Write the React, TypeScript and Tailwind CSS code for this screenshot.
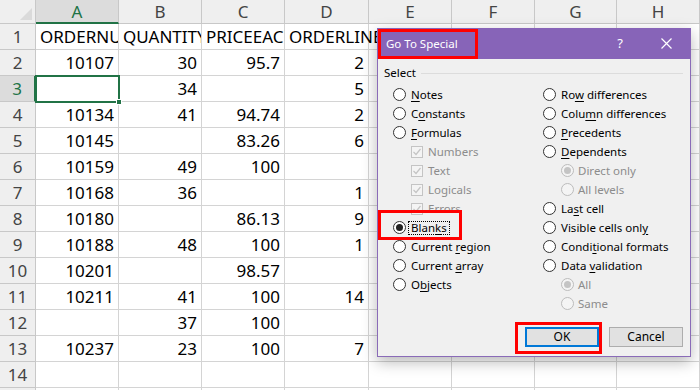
import React from "react";

const COLS = ["A", "B", "C", "D", "E", "F", "G", "H"];
const DATA: string[][] = [
  ["ORDERNUMBER", "QUANTITYORDERED", "PRICEEACH", "ORDERLINENUMBER"],
  ["10107", "30", "95.7", "2"],
  ["", "34", "", "5"],
  ["10134", "41", "94.74", "2"],
  ["10145", "", "83.26", "6"],
  ["10159", "49", "100", ""],
  ["10168", "36", "", "1"],
  ["10180", "", "86.13", "9"],
  ["10188", "48", "100", "1"],
  ["10201", "", "98.57", ""],
  ["10211", "41", "100", "14"],
  ["", "37", "100", ""],
  ["10237", "23", "100", "7"],
  ["", "", "", ""],
  ["", "", "", ""],
];

function Sheet() {
  const cells: React.ReactNode[] = [];
  cells.push(
    <div key="corner" className="relative bg-[#efefef] border-r border-b border-[#c8c8c8]">
      <svg className="absolute right-[3px] bottom-[3px]" width="12" height="12" viewBox="0 0 12 12">
        <polygon points="12,0 12,12 0,12" fill="#dadada" />
      </svg>
    </div>
  );
  COLS.forEach((c, i) => {
    const sel = i === 0;
    cells.push(
      <div
        key={"h" + c}
        className={
          sel
            ? "flex items-center justify-center bg-[#dcdcdc] text-[#217346] border-r border-[#c8c8c8] border-b-2 border-b-[#217346]"
            : "flex items-center justify-center bg-[#efefef] text-[#444] border-r border-b border-[#c8c8c8]"
        }
      >
        {c}
      </div>
    );
  });
  DATA.forEach((row, r) => {
    const sel = r === 2;
    cells.push(
      <div
        key={"r" + r}
        className={
          sel
            ? "flex items-center justify-center bg-[#dcdcdc] text-[#217346] border-b border-[#c8c8c8] border-r-2 border-r-[#217346]"
            : "flex items-center justify-center bg-[#efefef] text-[#444] border-r border-b border-[#c8c8c8]"
        }
      >
        {r + 1}
      </div>
    );
    COLS.forEach((c, ci) => {
      const v = ci < 4 ? row[ci] : "";
      const isHeader = r === 0;
      const overflow = isHeader && ci === 3;
      cells.push(
        <div
          key={"c" + r + c}
          className={
            "flex items-center border-r border-b border-[#d4d4d4] whitespace-nowrap " +
            (isHeader
              ? overflow
                ? "justify-start pl-[4px] overflow-visible"
                : "justify-start pl-[4px] overflow-hidden"
              : "justify-end pr-[4px] overflow-hidden")
          }
        >
          {overflow ? <span className="w-[88px] shrink-0 overflow-hidden">{v}</span> : v}
        </div>
      );
    });
  });
  return (
    <div className="grid grid-cols-[36px_83px_83px_83px_84px_83px_83px_82px_83px] grid-rows-[24px_repeat(15,26px)] font-['Noto_Sans',sans-serif] text-[17px] leading-none text-black">
      {cells}
    </div>
  );
}

function Radio({ checked, disabled }: { checked?: boolean; disabled?: boolean }) {
  return (
    <span
      className={
        "w-[13px] h-[13px] rounded-full border flex items-center justify-center shrink-0 " +
        (disabled ? "border-[#bcbcbc] bg-[#f4f4f4]" : "border-[#333] bg-white")
      }
    >
      {checked && (
        <span className={"w-[7px] h-[7px] rounded-full " + (disabled ? "bg-[#c4c4c4]" : "bg-[#222]")} />
      )}
    </span>
  );
}

function Check() {
  return (
    <span className="w-[12px] h-[12px] border border-[#c4c4c4] bg-[#f4f4f4] flex items-center justify-center shrink-0">
      <svg width="10" height="10" viewBox="0 0 10 10">
        <polyline points="1.5,5 4,7.5 8.5,2" fill="none" stroke="#c4c4c4" strokeWidth="1.2" />
      </svg>
    </span>
  );
}

function Lbl({ pre, u, post }: { pre: string; u: string; post: string }) {
  return (
    <span>
      {pre}
      <span className="underline underline-offset-[2px]">{u}</span>
      {post}
    </span>
  );
}

function RadioRow({ children, checked, focus }: { children: React.ReactNode; checked?: boolean; focus?: boolean }) {
  return (
    <div className="h-[19px] flex items-center gap-[5px]">
      <Radio checked={checked} />
      {focus ? (
        <span className="border border-dotted border-black ml-[-3px] px-[2px] leading-[12px]">{children}</span>
      ) : (
        children
      )}
    </div>
  );
}

function CheckRow({ text }: { text: string }) {
  return (
    <div className="h-[19px] flex items-center gap-[5px] ml-[18px] text-[#8c8c8c]">
      <Check />
      {text}
    </div>
  );
}

function SubRadio({ text, checked }: { text: string; checked?: boolean }) {
  return (
    <div className="h-[19px] flex items-center gap-[4px] ml-[18px] text-[#8c8c8c]">
      <Radio checked={checked} disabled />
      {text}
    </div>
  );
}

function Dialog() {
  return (
    <div className="absolute left-[377px] top-[28px] w-[314px] h-[329px] bg-[#f0f0f0] border border-t-0 border-[#8a6bb8] shadow-[0_5px_14px_rgba(0,0,0,0.28)] flex flex-col font-['Noto_Sans',sans-serif] text-[11.5px] text-black">
      <div className="h-[31px] bg-[#8764b8] flex items-center pl-[9px] text-white -mx-px">
        <span className="text-[11.5px]">Go To Special</span>
        <span className="ml-auto mr-[38px] text-[13px]">?</span>
        <svg className="mr-[19px]" width="11" height="11" viewBox="0 0 11 11">
          <path d="M0.5 0.5 L10.5 10.5 M10.5 0.5 L0.5 10.5" stroke="white" strokeWidth="1.2" />
        </svg>
      </div>
      <div className="flex-1 flex flex-col pt-[6px]">
        <div className="h-[16px] flex items-center pl-[6px] pr-[7px]">
          <span>Select</span>
          <span className="flex-1 h-px bg-[#dcdcdc] ml-[5px]" />
        </div>
        <div className="flex mt-[4px]">
          <div className="w-[165px] pl-[15px] flex flex-col">
            <RadioRow><Lbl pre="" u="N" post="otes" /></RadioRow>
            <RadioRow><Lbl pre="C" u="o" post="nstants" /></RadioRow>
            <RadioRow><Lbl pre="" u="F" post="ormulas" /></RadioRow>
            <CheckRow text="Numbers" />
            <CheckRow text="Text" />
            <CheckRow text="Logicals" />
            <CheckRow text="Errors" />
            <RadioRow checked focus><Lbl pre="Blan" u="k" post="s" /></RadioRow>
            <RadioRow><Lbl pre="Current " u="r" post="egion" /></RadioRow>
            <RadioRow><Lbl pre="Current " u="a" post="rray" /></RadioRow>
            <RadioRow><Lbl pre="O" u="b" post="jects" /></RadioRow>
          </div>
          <div className="flex flex-col">
            <RadioRow><Lbl pre="Ro" u="w" post=" differences" /></RadioRow>
            <RadioRow><Lbl pre="Colu" u="m" post="n differences" /></RadioRow>
            <RadioRow><Lbl pre="" u="P" post="recedents" /></RadioRow>
            <RadioRow><Lbl pre="" u="D" post="ependents" /></RadioRow>
            <SubRadio text="Direct only" checked />
            <SubRadio text="All levels" />
            <RadioRow><Lbl pre="La" u="s" post="t cell" /></RadioRow>
            <RadioRow><Lbl pre="Visible cells onl" u="y" post="" /></RadioRow>
            <RadioRow><Lbl pre="Condi" u="t" post="ional formats" /></RadioRow>
            <RadioRow><Lbl pre="Data " u="v" post="alidation" /></RadioRow>
            <SubRadio text="All" checked />
            <SubRadio text="Same" />
          </div>
        </div>
        <div className="mt-auto flex justify-end gap-[10px] pr-[7px] pb-[9px]">
          <button className="w-[74px] h-[20px] bg-[#e1e1e1] border-2 border-[#0078d7] flex items-center justify-center text-[12px]">
            OK
          </button>
          <button className="w-[74px] h-[20px] bg-[#e1e1e1] border border-[#adadad] flex items-center justify-center text-[12px]">
            Cancel
          </button>
        </div>
      </div>
    </div>
  );
}

export default function App() {
  return (
    <div className="relative w-[700px] h-[390px] overflow-hidden bg-white">
      <Sheet />
      <div className="absolute left-[35px] top-[75px] w-[85px] h-[28px] border-2 border-[#217346] pointer-events-none">
        <div className="absolute right-[-4px] bottom-[-4px] w-[6px] h-[6px] bg-[#217346] border border-white" />
      </div>
      <Dialog />
      <div className="absolute left-[378px] top-[29px] w-[100px] h-[30px] border-[3px] border-[#ff0000]" />
      <div className="absolute left-[378px] top-[210px] w-[84px] h-[30px] border-[3px] border-[#ff0000]" />
      <div className="absolute left-[515px] top-[322px] w-[87px] h-[32px] border-[3px] border-[#ff0000]" />
    </div>
  );
}
